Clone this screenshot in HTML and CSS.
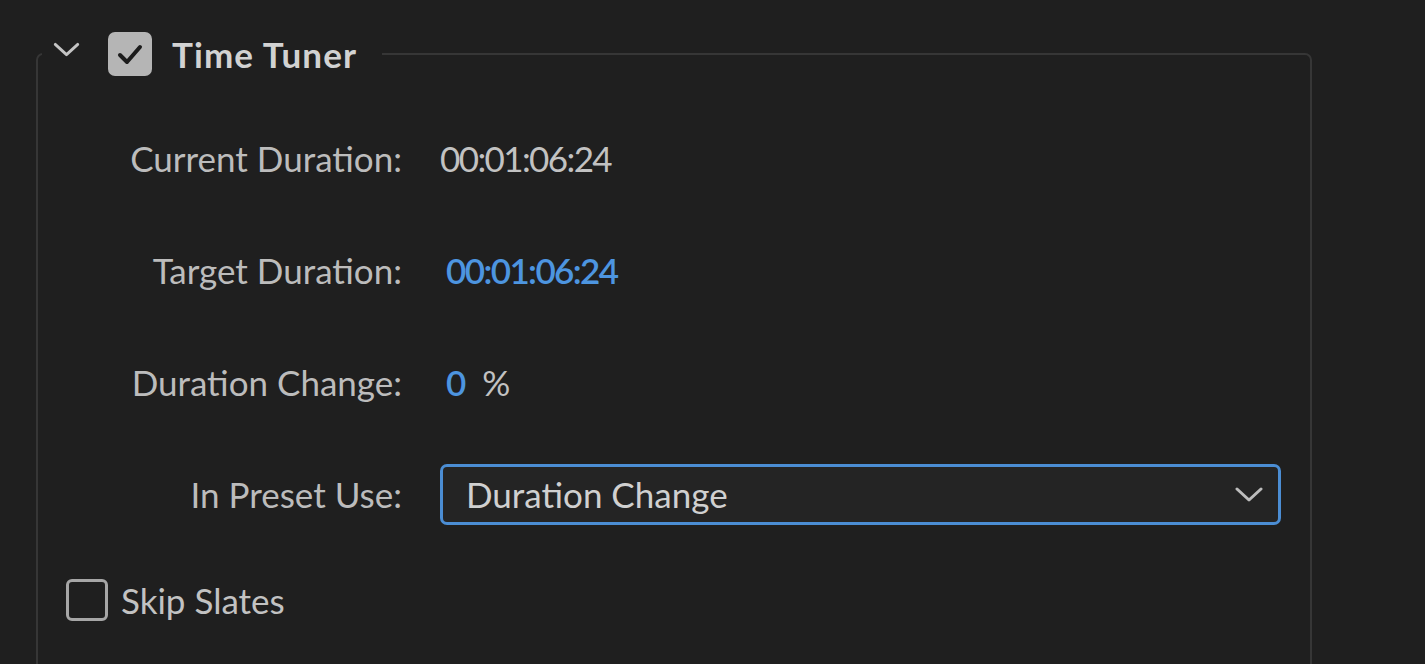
FILE: index.html
```html
<!DOCTYPE html>
<html>
<head>
<meta charset="utf-8">
<link rel="stylesheet" href="styles.css">
</head>
<body>
<fieldset class="panel">
  <legend class="panel-head">
    <svg class="twisty" width="28" height="16" viewBox="0 0 28 16"><path d="M2 2.5 L14 13.5 L26 2.5" fill="none" stroke="#c4c4c4" stroke-width="3" stroke-linecap="round" stroke-linejoin="round"/></svg>
    <span class="check checked">
      <svg width="44" height="44" viewBox="0 0 44 44"><path d="M12 23 L19 30 L32 15" fill="none" stroke="#1c1c1c" stroke-width="4" stroke-linecap="round" stroke-linejoin="round"/></svg>
    </span>
    <span class="head-title">Time Tuner</span>
  </legend>
  <div class="grid">
    <div class="label">Current Duration:</div>
    <div class="value tc">00:01:06:24</div>
    <div class="label">Target Duration:</div>
    <div class="value tc blue link">00:01:06:24</div>
    <div class="label">Duration Change:</div>
    <div class="value"><span class="blue num">0</span><span class="pct">%</span></div>
    <div class="label">In Preset Use:</div>
    <div class="value">
      <div class="select">
        <span>Duration Change</span>
        <svg width="28" height="16" viewBox="0 0 28 16"><path d="M2 2 L14 13 L26 2" fill="none" stroke="#bdbdbd" stroke-width="3" stroke-linecap="round" stroke-linejoin="round"/></svg>
      </div>
    </div>
  </div>
  <div class="skip">
    <span class="check empty"></span>
    <span class="skip-label">Skip Slates</span>
  </div>
</fieldset>
</body>
</html>
```

FILE: styles.css
```css
html, body {
  margin: 0;
  padding: 0;
  background: #1f1f1f;
  height: 100%;
  overflow: hidden;
}
body {
  font-family: "Lato", "Open Sans", sans-serif;
  font-size: 35px;
  color: #c2c2c2;
}
.panel {
  margin: 32px 0 0 36px;
  width: 1276px;
  box-sizing: border-box;
  border: 2px solid #363636;
  border-radius: 7px;
  padding: 0;
  min-height: 700px;
}
.panel-head {
  display: flex;
  align-items: center;
  padding: 0 25px 0 4px;
  margin-left: 4px;
  height: 44px;
}
.twisty {
  margin-left: 7px;
  margin-top: -10px;
  width: 27px;
  height: 15px;
}
.check {
  box-sizing: border-box;
  display: inline-block;
}
.check.checked {
  width: 44px;
  height: 44px;
  background: #b5b5b5;
  border-radius: 7px;
  margin-left: 28px;
}
.check.checked svg { display: block; }
.head-title {
  font-weight: 700;
  color: #d2d2d2;
  margin-left: 20px;
  letter-spacing: 1.1px;
}
.grid {
  display: grid;
  grid-template-columns: 364px 1fr;
  grid-auto-rows: 112px;
  column-gap: 38px;
  align-items: center;
  padding-top: 26px;
}
.label {
  text-align: right;
  color: #bcbcbc;
}
.value {
  display: flex;
  align-items: center;
  color: #c2c2c2;
}
.tc {
  letter-spacing: -1.6px;
}
.blue {
  color: #4d95e0;
}
.link {
  padding-left: 6px;
  font-weight: 600;
}
.num {
  padding-left: 6px;
  font-weight: 600;
}
.pct {
  margin-left: 16px;
}
.select {
  box-sizing: border-box;
  width: 841px;
  height: 61px;
  border: 3px solid #4b8dd3;
  border-radius: 7px;
  background: #242424;
  display: flex;
  align-items: center;
  justify-content: space-between;
  padding: 0 15px 0 23px;
  color: #d0d0d0;
}
.select svg { margin-top: 2px; }
.skip {
  display: flex;
  align-items: center;
  margin: 29px 0 0 28px;
}
.check.empty {
  width: 42px;
  height: 42px;
  border: 3px solid #a6a6a6;
  border-radius: 6px;
}
.skip-label {
  margin-left: 13px;
  color: #c2c2c2;
}
```
